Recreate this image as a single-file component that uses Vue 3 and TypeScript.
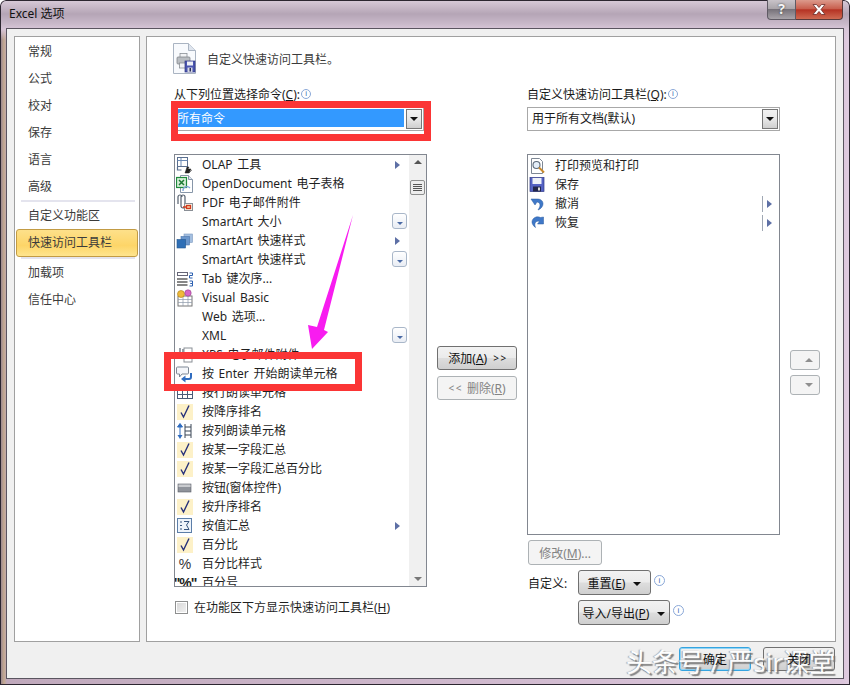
<template>
  <div class="window">
    <div class="titlebar">
      <span class="title">Excel 选项</span>
      <div class="caption">
        <div class="cap-help">?</div>
        <div class="cap-close">
          <svg width="16" height="13" viewBox="0 0 16 13">
            <path d="M2 1.500h3.500L8 4.500l2.500-3H14L10 6.500l4 5h-3.500L8 8.500l-2.500 3H2l4-5z" fill="#fff" stroke="#6b2c28" stroke-width="0.8" />
          </svg>
        </div>
      </div>
    </div>

    <div class="client">
      <div class="content">
        <nav class="nav">
          <template v-for="item in navItems" :key="item.label">
            <div v-if="item.sep" class="nav-sep"></div>
            <div class="nav-item" :class="{ active: item.active }">{{ item.label }}</div>
          </template>
        </nav>

        <section class="panel">
          <header class="panel-head">
            <svg class="head-icon" width="23" height="31" viewBox="0 0 23 31">
              <path d="M.5.500h15l7 7v23H.5z" fill="#f8fafd" stroke="#aab4c2" />
              <path d="M15.500.500v7h7" fill="#dfe5ee" stroke="#aab4c2" />
              <rect x="7" y="10.500" width="7" height="4" fill="#f2f3f5" stroke="#8a8f96" stroke-width="0.8" />
              <rect x="4" y="14" width="13" height="7" rx="1" fill="#b9bdc2" stroke="#80858c" stroke-width="0.8" />
              <rect x="6.500" y="20" width="8" height="5" fill="#f2f3f5" stroke="#8a8f96" stroke-width="0.8" />
              <rect x="12" y="18" width="10" height="11" fill="#4a55b0" stroke="#2e3580" stroke-width="0.7" />
              <rect x="14" y="18.500" width="6" height="4" fill="#eef0f6" />
              <rect x="14.500" y="24.500" width="5" height="4.500" fill="#d5d8e5" />
              <rect x="16.500" y="25" width="1.500" height="3.500" fill="#2a2f55" />
            </svg>
            <span>自定义快速访问工具栏。</span>
          </header>

          <div class="columns">
            <div class="col-left">
              <div class="field-label">从下列位置选择命令(<u>C</u>):<i class="info">i</i></div>
              <div class="combo">
                <div class="combo-text selected">所有命令</div>
                <div class="combo-btn"><b class="tri"></b></div>
              </div>
              <div class="listbox commands">
                <div class="rows">
                  <div v-for="row in commands" :key="row.label + row.icon" class="row">
                    <span class="row-icon">
                      <svg v-if="row.icon === 'olap'" width="18" height="18" viewBox="0 0 18 18">
                        <rect x="1.500" y="1.500" width="10" height="9" fill="#fff" stroke="#5a6f8f" />
                        <path d="M1.500 4.500h10M5 2v8" stroke="#6b8ab5" />
                        <path d="M1.500 11v3h4" fill="none" stroke="#5a6f8f" stroke-width="1.200" />
                        <path d="M9 17l2-6h2l-1 2h3l-2 4zM13 17l3-3" fill="#222" stroke="#222" stroke-width="0.500" />
                      </svg>
                      <svg v-else-if="row.icon === 'ods'" width="18" height="18" viewBox="0 0 18 18">
                        <path d="M4.500 .5h8l4 4v13h-12z" fill="#fff" stroke="#8796a8" />
                        <path d="M12.500 .5v4h4" fill="#dfe5ee" stroke="#8796a8" />
                        <rect x=".5" y="2.500" width="10" height="10" fill="#d6efd8" stroke="#1f8a3c" stroke-width="1.200" />
                        <path d="M3 5l5 5M8 5l-5 5" stroke="#1c7a34" stroke-width="1.500" />
                        <path d="M7 16a4 4 0 0 1 7-3" fill="none" stroke="#7ea5d8" stroke-width="1.300" />
                      </svg>
                      <svg v-else-if="row.icon === 'pdf'" width="18" height="18" viewBox="0 0 18 18">
                        <path d="M2 10V3a2 2 0 0 1 4 0M5 12V3a2 2 0 0 1 4 0v9a2 2 0 0 1-4 0" fill="none" stroke="#55606e" stroke-width="1.200" />
                        <rect x="8.500" y="9.500" width="8" height="7" fill="#f7f3e6" stroke="#8a8f96" />
                        <rect x="10.500" y="11.500" width="4" height="3" fill="#f2c9a0" stroke="#d23a1d" stroke-width="1.300" />
                        <path d="M7 13h3" stroke="#d23a1d" stroke-width="1.300" />
                      </svg>
                      <svg v-else-if="row.icon === 'smart'" width="18" height="18" viewBox="0 0 18 18">
                        <rect x="8" y="2" width="8.500" height="8.500" fill="#a4bfe0" stroke="#7d9abf" stroke-width="0.600" />
                        <rect x="5" y="4.500" width="8.500" height="8.500" fill="#6c97cc" stroke="#4c76aa" stroke-width="0.600" />
                        <rect x="1" y="7.500" width="8.500" height="8.500" fill="#2f6fb6" stroke="#245790" stroke-width="0.600" />
                      </svg>
                      <svg v-else-if="row.icon === 'tab'" width="18" height="18" viewBox="0 0 18 18">
                        <rect x="1.500" y="2.500" width="10" height="3" fill="#fff" stroke="#667" />
                        <path d="M1 9h10.500M1 12h10.500M1 15h10.500" stroke="#111" stroke-width="1.100" />
                        <path d="M13.500 3h3v2.500h-3V8h3M13.500 11h3v2.500h-2 2V16h-3" fill="none" stroke="#2a5fb0" stroke-width="1" />
                      </svg>
                      <svg v-else-if="row.icon === 'vb'" width="18" height="18" viewBox="0 0 18 18">
                        <rect x="2" y="7" width="14" height="10" fill="#fff" stroke="#777" />
                        <path d="M2 10.500h14M2 13.500h14M7 7v10M12 7v10" stroke="#8c9aaa" stroke-width="0.700" />
                        <circle cx="5" cy="5" r="3.500" fill="#f0b93a" stroke="#a67c12" stroke-width="0.600" />
                        <circle cx="12" cy="4" r="3.200" fill="#d765c8" stroke="#94408a" stroke-width="0.600" />
                      </svg>
                      <svg v-else-if="row.icon === 'xps'" width="18" height="18" viewBox="0 0 18 18">
                        <path d="M4 2v9a2 2 0 0 0 3 0V3" fill="none" stroke="#55606e" stroke-width="1.200" />
                        <rect x="8" y="2" width="8" height="14" fill="#fff" stroke="#8a8f96" />
                      </svg>
                      <svg v-else-if="row.icon === 'enter'" width="18" height="18" viewBox="0 0 18 18">
                        <path d="M1.500 2h10a1 1 0 0 1 1 1v5a1 1 0 0 1-1 1H6L3.500 12V9h-2a1 1 0 0 1-1-1V3a1 1 0 0 1 1-1z" fill="#f4f6fa" stroke="#7d8794" />
                        <path d="M15 8v4a2 2 0 0 1-2 2H8" fill="none" stroke="#2f6cc0" stroke-width="2" />
                        <path d="M9.500 10.500L5 14l4.500 3.500z" fill="#2f6cc0" />
                      </svg>
                      <svg v-else-if="row.icon === 'rowread'" width="18" height="18" viewBox="0 0 18 18">
                        <rect x="1.500" y="2.500" width="15" height="12" fill="#fff" stroke="#4a5c78" />
                        <path d="M1.500 6.500h15M1.500 10.500h15M6.500 2.500v12M11.500 2.500v12" stroke="#4a5c78" />
                      </svg>
                      <svg v-else-if="row.icon === 'colread'" width="18" height="18" viewBox="0 0 18 18">
                        <path d="M4 1.500L1.500 5h5zM4 5v8" fill="#2f6cc0" stroke="#2f6cc0" />
                        <path d="M4 17l-2.500-4h5z" fill="#2f6cc0" />
                        <path d="M9 2v14M15 2v14M9 5h6M9 9h6M9 13h6" stroke="#3b4657" />
                      </svg>
                      <span v-else-if="row.icon === 'check'" class="check-box">
                        <svg width="12" height="15" viewBox="0 0 12 15">
                          <path d="M2 8.500l2.500 4.500L10 1.500" fill="none" stroke="#26307a" stroke-width="1.400" />
                        </svg>
                      </span>
                      <svg v-else-if="row.icon === 'form'" width="18" height="18" viewBox="0 0 18 18">
                        <rect x="2" y="5" width="13" height="8" fill="#8f939b" stroke="#5a5f68" stroke-width="0.600" />
                        <rect x="2.500" y="5.500" width="12" height="2.500" fill="#c9cbcf" />
                      </svg>
                      <svg v-else-if="row.icon === 'value'" width="18" height="18" viewBox="0 0 18 18">
                        <rect x="1.500" y="1.500" width="14" height="14" fill="#eef4fb" stroke="#5c7ea8" />
                        <path d="M4 5h2M4 8.500h2M4 12h2M8 4.500h5L10.500 8 13 12.500H8" fill="none" stroke="#36557f" />
                      </svg>
                      <span v-else-if="row.icon === 'percent'" class="glyph">%</span>
                      <span v-else-if="row.icon === 'percent2'" class="glyph strong">"%"</span>
                    </span>
                    <span class="row-label">{{ row.label }}</span>
                    <b v-if="row.arrow" class="sub-arrow"></b>
                    <span v-if="row.drop" class="row-drop"><b class="tri small"></b></span>
                  </div>
                </div>
                <div class="scrollbar">
                  <b class="tri up"></b>
                  <div class="thumb"><s></s><s></s><s></s><s></s></div>
                  <b class="tri down"></b>
                </div>
              </div>
              <label class="check-row">
                <span class="checkbox"></span>
                <span>在功能区下方显示快速访问工具栏(<u>H</u>)</span>
              </label>
            </div>

            <div class="col-mid">
              <button class="btn add"><span>添加(<u>A</u>)</span><span class="chevrons">&gt; &gt;</span></button>
              <button class="btn disabled add"><span class="chevrons">&lt; &lt;</span><span>删除(<u>R</u>)</span></button>
            </div>

            <div class="col-right">
              <div class="field-label">自定义快速访问工具栏(<u>Q</u>):<i class="info">i</i></div>
              <div class="combo">
                <div class="combo-text">用于所有文档(默认)</div>
                <div class="combo-btn"><b class="tri"></b></div>
              </div>
              <div class="listbox toolbar-list">
                <div v-for="row in toolbar" :key="row.label" class="row">
                  <span class="row-icon">
                    <svg v-if="row.icon === 'preview'" width="18" height="18" viewBox="0 0 18 18">
                      <path d="M2.500 1.500h8l3 3v12h-11z" fill="#fff" stroke="#7d8794" />
                      <circle cx="7.500" cy="8" r="3.500" fill="#e4eef8" stroke="#5d6a7a" stroke-width="1.100" />
                      <path d="M10 10.500l5 5" stroke="#c9892c" stroke-width="2" />
                    </svg>
                    <svg v-else-if="row.icon === 'save'" width="18" height="18" viewBox="0 0 18 18">
                      <rect x="1" y="1.500" width="14" height="14" fill="#5562c4" stroke="#303a86" stroke-width="0.700" />
                      <rect x="3.500" y="2" width="9" height="6" fill="#eef1f8" />
                      <rect x="4" y="10.500" width="8" height="5" fill="#22264a" />
                      <rect x="9" y="11.500" width="2" height="3" fill="#ddd" />
                    </svg>
                    <svg v-else-if="row.icon === 'undo'" width="18" height="18" viewBox="0 0 18 18">
                      <path d="M2 4h6c4 0 6 2 6 5 0 2-2 5-5 6 1-2 2-3 2-5 0-2-2-3-3-3L6 10z" fill="#3f78c8" stroke="#2b5a9e" stroke-width="0.500" />
                    </svg>
                    <svg v-else-if="row.icon === 'redo'" width="18" height="18" viewBox="0 0 18 18">
                      <path d="M14.500 3v7h-6l2-2.500c-3-1-6 1-4 6-3-2-5-6-2-9 2-2 5-2 7-1z" fill="#3f78c8" stroke="#2b5a9e" stroke-width="0.500" />
                    </svg>
                  </span>
                  <span class="row-label">{{ row.label }}</span>
                  <span v-if="row.arrow" class="split-arrow"><b class="sub-arrow"></b></span>
                </div>
              </div>
              <button class="btn disabled modify">修改(<u>M</u>)...</button>
              <div class="action-row">
                <span class="action-label">自定义:</span>
                <button class="btn reset">重置(<u>E</u>)<b class="tri"></b></button>
                <i class="info big">i</i>
              </div>
              <div class="action-row second">
                <button class="btn export">导入/导出(<u>P</u>)<b class="tri"></b></button>
                <i class="info big">i</i>
              </div>
            </div>

            <div class="col-order">
              <button class="btn disabled order"><b class="tri up gray"></b></button>
              <button class="btn disabled order"><b class="tri gray"></b></button>
            </div>
          </div>
        </section>
      </div>

      <footer class="footer">
        <button class="btn action primary"><span>确定</span></button>
        <button class="btn action"><span>关闭</span></button>
      </footer>
    </div>

    <!-- 标注层 -->
    <div class="mark mark-combo"></div>
    <div class="mark mark-row"></div>
    <svg class="mark-arrow" width="850" height="685" viewBox="0 0 850 685">
      <polygon points="353,215 324,330 328,332 312,349 308,325 317,327" fill="#f81cf0" />
    </svg>
    <div class="watermark">头条号 / 严sir课堂</div>
  </div>
</template>

<script setup lang="ts">
interface NavItem {
  label: string
  sep?: boolean
  active?: boolean
}

interface Row {
  label: string
  icon?: string
  arrow?: boolean
  drop?: boolean
}

const navItems: NavItem[] = [
  { label: '常规' },
  { label: '公式' },
  { label: '校对' },
  { label: '保存' },
  { label: '语言' },
  { label: '高级' },
  { label: '自定义功能区', sep: true },
  { label: '快速访问工具栏', active: true },
  { label: '加载项', sep: true },
  { label: '信任中心' }
]

const commands: Row[] = [
  { label: 'OLAP 工具', icon: 'olap', arrow: true },
  { label: 'OpenDocument 电子表格', icon: 'ods' },
  { label: 'PDF 电子邮件附件', icon: 'pdf' },
  { label: 'SmartArt 大小', drop: true },
  { label: 'SmartArt 快速样式', icon: 'smart', arrow: true },
  { label: 'SmartArt 快速样式', drop: true },
  { label: 'Tab 键次序...', icon: 'tab' },
  { label: 'Visual Basic', icon: 'vb' },
  { label: 'Web 选项...' },
  { label: 'XML', drop: true },
  { label: 'XPS 电子邮件附件', icon: 'xps' },
  { label: '按 Enter 开始朗读单元格', icon: 'enter' },
  { label: '按行朗读单元格', icon: 'rowread' },
  { label: '按降序排名', icon: 'check' },
  { label: '按列朗读单元格', icon: 'colread' },
  { label: '按某一字段汇总', icon: 'check' },
  { label: '按某一字段汇总百分比', icon: 'check' },
  { label: '按钮(窗体控件)', icon: 'form' },
  { label: '按升序排名', icon: 'check' },
  { label: '按值汇总', icon: 'value', arrow: true },
  { label: '百分比', icon: 'check' },
  { label: '百分比样式', icon: 'percent' },
  { label: '百分号', icon: 'percent2' }
]

const toolbar: Row[] = [
  { label: '打印预览和打印', icon: 'preview' },
  { label: '保存', icon: 'save' },
  { label: '撤消', icon: 'undo', arrow: true },
  { label: '恢复', icon: 'redo', arrow: true }
]
</script>

<style>
html,
body {
  margin: 0;
  overflow: hidden;
}
</style>

<style scoped>
.window {
  position: relative;
  width: 850px;
  height: 685px;
  box-sizing: border-box;
  padding: 0 7px 7px 7px;
  display: flex;
  flex-direction: column;
  overflow: hidden;
  font-family: "Noto Sans", "Noto Sans CJK SC", sans-serif;
  font-size: 12px;
  color: #1a1a1a;
  background:
    linear-gradient(180deg, #d9cbd9 0, #b5a5b6 14px, #c9b9ca 24px, #d8c6d8 29px, rgba(216, 192, 216, 0) 40px),
    linear-gradient(90deg, #8f7f92 0, #c4a98f 4px, #c0a9bc 7px, #dcc6dc 843px, #e0cde0 850px);
  border-radius: 6px 6px 0 0;
  box-shadow: inset 0 0 0 1px #2c2630;
}

.titlebar {
  height: 29px;
  flex: none;
  display: flex;
  justify-content: space-between;
}

.title {
  margin: 6px 0 0 2px;
  line-height: 16px;
  color: #111;
}

.caption {
  display: flex;
  height: 20px;
}

.cap-help {
  width: 29px;
  box-sizing: border-box;
  border: 1px solid #5f5a64;
  border-top: none;
  border-radius: 0 0 0 4px;
  text-align: center;
  line-height: 18px;
  font-size: 14px;
  font-weight: 700;
  color: #f4f4f4;
  text-shadow: 0 0 2px #333;
  background: linear-gradient(180deg, #c9c3c9 0, #aaa5aa 45%, #77727a 50%, #a9a4aa 100%);
}

.cap-close {
  width: 47px;
  box-sizing: border-box;
  border: 1px solid #5a3a3a;
  border-top: none;
  border-left: none;
  border-radius: 0 0 4px 0;
  display: flex;
  align-items: center;
  justify-content: center;
  background: linear-gradient(180deg, #dc9a8c 0, #c9604f 45%, #b53324 52%, #cf6a52 100%);
}

.client {
  flex: 1;
  min-height: 0;
  display: flex;
  flex-direction: column;
  background: #f0f0f0;
  box-shadow: 0 0 0 1px #5a5560;
}

.content {
  flex: 1;
  min-height: 0;
  display: flex;
  gap: 6px;
  padding: 7px 7px 0;
}

.nav {
  width: 126px;
  box-sizing: border-box;
  padding-top: 1px;
  background: #fff;
  border: 1px solid #a0a0a0;
}

.nav-item {
  height: 27px;
  line-height: 27px;
  padding-left: 13px;
  color: #3b3b3b;
}

.nav-item.active {
  height: 28px;
  margin: 0 1px;
  box-sizing: border-box;
  padding-left: 11px;
  border: 1px solid #c29b44;
  border-radius: 3px;
  line-height: 26px;
  background: linear-gradient(180deg, #fde08a 0, #fdd568 60%, #fee58f 100%);
}

.nav-sep {
  height: 2px;
  margin: 0 4px 0 6px;
  background: #e4e4ee;
}

.panel {
  flex: 1;
  min-width: 0;
  box-sizing: border-box;
  padding: 6px 0 0 26px;
  background: #fff;
  border: 1px solid #a0a0a0;
}

.panel-head {
  display: flex;
  align-items: center;
  height: 31px;
  color: #3b3b3b;
}

.head-icon {
  flex: none;
  margin: 0 11px 0 0;
}

.columns {
  display: flex;
  margin-top: 14px;
  padding-left: 1px;
}

.col-left {
  width: 253px;
  flex: none;
}

.col-right {
  width: 253px;
  flex: none;
}

.col-mid {
  width: 80px;
  flex: none;
  margin: 258px 10px 0;
  display: flex;
  flex-direction: column;
  gap: 6px;
}

.col-order {
  width: 30px;
  margin: 262px 0 0 10px;
  display: flex;
  flex-direction: column;
  gap: 5px;
}

.field-label {
  height: 14px;
  line-height: 14px;
  color: #1a1a1a;
  white-space: nowrap;
}

.info {
  display: inline-block;
  width: 10px;
  height: 10px;
  box-sizing: border-box;
  margin-left: 1px;
  vertical-align: 3px;
  border: 1px solid #8aa8d8;
  border-radius: 50%;
  background: #fff;
  color: #3f6fb5;
  font: normal 8px/8px "Liberation Sans", sans-serif;
  text-align: center;
}

.info.big {
  width: 11px;
  height: 11px;
  line-height: 9px;
}

.combo {
  display: flex;
  align-items: stretch;
  width: 253px;
  height: 24px;
  margin-top: 5px;
  box-sizing: border-box;
  padding: 1px;
  border: 1px solid #a8a8a8;
  background: #fff;
}

.col-left .combo {
  width: 250px;
}

.combo-text {
  flex: 1;
  line-height: 20px;
  padding-left: 3px;
}

.combo-text.selected {
  height: 18px;
  margin-right: 2px;
  padding-left: 1px;
  line-height: 19px;
  background: #3399ff;
  color: #fff;
}

.combo-btn {
  width: 16px;
  box-sizing: border-box;
  border: 1px solid #777;
  display: flex;
  align-items: center;
  justify-content: center;
  background: linear-gradient(180deg, #f2f2f2 0, #e8e8e8 50%, #cfcfcf 100%);
}

.tri {
  display: inline-block;
  width: 0;
  height: 0;
  border-left: 4px solid transparent;
  border-right: 4px solid transparent;
  border-top: 4px solid #111;
}

.tri.up {
  border-top: none;
  border-bottom: 4px solid #555;
}

.tri.gray {
  border-top-color: #8f8f8f;
  border-bottom-color: #8f8f8f;
}

.tri.down {
  border-top-color: #777;
}

.listbox {
  box-sizing: border-box;
  margin-top: 23px;
  background: #fff;
  border: 1px solid #828790;
  overflow: hidden;
}

.commands {
  height: 433px;
  display: flex;
}

.toolbar-list {
  height: 381px;
  padding-top: 1px;
}

.rows {
  flex: 1;
  min-width: 0;
}

.row {
  display: flex;
  align-items: center;
  height: 19px;
  white-space: nowrap;
  color: #1f1f1f;
  word-spacing: 1.500px;
}

.row-icon {
  width: 18px;
  height: 19px;
  margin-left: 1px;
  flex: none;
  display: flex;
  align-items: center;
  justify-content: center;
}

.row-label {
  margin-left: 8px;
  flex: 1;
  line-height: 19px;
}

.check-box {
  width: 16px;
  height: 16px;
  display: flex;
  align-items: center;
  justify-content: center;
  background: #fdf1c8;
}

.glyph {
  font: 14px/18px "Liberation Sans", sans-serif;
  color: #333;
}

.glyph.strong {
  font-weight: 700;
  letter-spacing: -1px;
  color: #222;
}

.sub-arrow {
  display: block;
  flex: none;
  width: 0;
  height: 0;
  margin-right: 9px;
  border-top: 4px solid transparent;
  border-bottom: 4px solid transparent;
  border-left: 5px solid #5d6fa5;
}

.split-arrow {
  flex: none;
  height: 16px;
  padding-left: 4px;
  border-left: 1px solid #a0a8b4;
  display: flex;
  align-items: center;
  margin-right: -2px;
}

.row-drop {
  flex: none;
  width: 15px;
  height: 16px;
  margin: 0 2px 2px 0;
  box-sizing: border-box;
  border: 1px solid #a9b7c9;
  border-radius: 3px;
  display: flex;
  align-items: flex-end;
  justify-content: center;
  padding-bottom: 3px;
  background: linear-gradient(180deg, #fff 0, #e9edf4 100%);
}

.tri.small {
  border-left-width: 3px;
  border-right-width: 3px;
  border-top: 3px solid #4a6aa5;
}

.scrollbar {
  width: 17px;
  flex: none;
  position: relative;
  background: #f0f0f0;
  display: flex;
  flex-direction: column;
  align-items: center;
}

.scrollbar .up {
  margin-top: 5px;
}

.scrollbar .down {
  margin-top: auto;
  margin-bottom: 5px;
}

.thumb {
  width: 15px;
  height: 15px;
  margin-top: 16px;
  box-sizing: border-box;
  border: 1px solid #8e8f8f;
  border-radius: 2px;
  background: #ededed;
  display: flex;
  flex-direction: column;
  align-items: center;
  justify-content: center;
  gap: 1px;
}

.thumb s {
  width: 9px;
  height: 1px;
  background: #555;
}

.check-row {
  display: flex;
  align-items: center;
  gap: 6px;
  height: 14px;
  margin-top: 13px;
  padding-left: 1px;
  color: #1f1f1f;
  white-space: nowrap;
}

.checkbox {
  width: 13px;
  height: 13px;
  box-sizing: border-box;
  border: 1px solid #8e8f8f;
  background: linear-gradient(135deg, #d6d6d6 0, #f2f2f2 100%);
  box-shadow: inset 0 0 0 1px #fff;
}

.btn {
  box-sizing: border-box;
  padding: 0;
  border: 1px solid #707070;
  border-radius: 3px;
  font: inherit;
  color: #111;
  white-space: nowrap;
  background: linear-gradient(180deg, #f2f2f2 0, #ebebeb 48%, #dddddd 52%, #cfcfcf 100%);
}

.btn .tri {
  margin-left: 8px;
  vertical-align: 2px;
}

.btn.disabled {
  border-color: #adb2b5;
  background: #f4f4f4;
  color: #838383;
}

.add {
  height: 24px;
  display: flex;
  align-items: center;
  justify-content: center;
  gap: 6px;
}

.chevrons {
  font-size: 10px;
  letter-spacing: -0.500px;
}

.modify {
  display: block;
  width: 74px;
  height: 25px;
  margin: 5px 0 0 1px;
}

.action-row {
  display: flex;
  align-items: center;
  height: 25px;
  margin-top: 5px;
  padding-left: 1px;
}

.action-row.second {
  padding-left: 51px;
}

.action-label {
  width: 50px;
  flex: none;
}

.reset {
  width: 73px;
  height: 25px;
}

.export {
  width: 92px;
  height: 25px;
}

.action-row .info {
  margin: -5px 0 0 3px;
}

.order {
  height: 20px;
  display: flex;
  align-items: center;
  justify-content: center;
}

.footer {
  height: 36px;
  flex: none;
  box-sizing: border-box;
  padding: 5px 8px 0 0;
  display: flex;
  justify-content: flex-end;
  gap: 12px;
}

.action {
  width: 72px;
  height: 24px;
}

.action span {
  position: relative;
  z-index: 2;
}

.primary {
  border-color: #35a4e0;
  box-shadow: inset 0 0 0 1px #8fd4f5;
}

.mark {
  position: absolute;
  box-sizing: border-box;
  border: 7px solid #fb3535;
  pointer-events: none;
}

.mark-combo {
  left: 171px;
  top: 101px;
  width: 260px;
  height: 40px;
}

.mark-row {
  left: 164px;
  top: 352px;
  width: 198px;
  height: 39px;
}

.mark-arrow {
  position: absolute;
  left: 0;
  top: 0;
  pointer-events: none;
}

.watermark {
  position: absolute;
  z-index: 1;
  left: 626px;
  top: 644px;
  font-size: 26px;
  line-height: 36px;
  white-space: nowrap;
  color: #fff;
  text-shadow: 2px 2px 1px #777, -1px 0 1px #999;
  opacity: 0.9;
  pointer-events: none;
}
</style>
